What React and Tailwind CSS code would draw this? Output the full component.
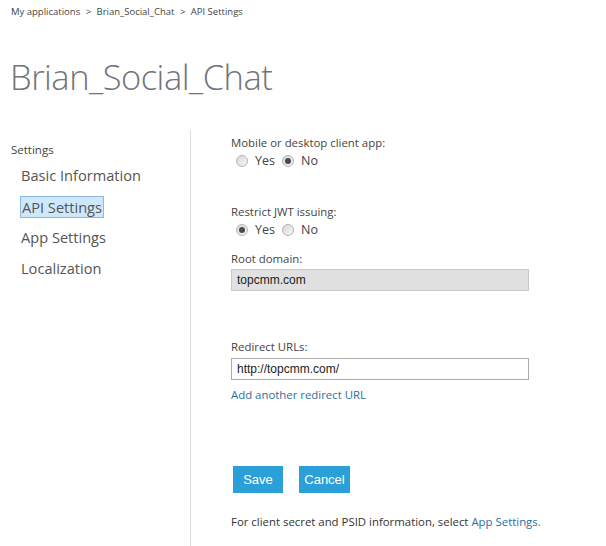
import React from "react";

function Radio({ checked, label }) {
  return (
    <span className="inline-flex items-center mr-[2px]">
      <span className="w-[12px] h-[12px] rounded-full border border-[#b4b4b4] bg-gradient-to-br from-[#d8d8d8] to-[#f6f6f6] flex items-center justify-center ml-[5px]">
        {checked && <span className="w-[6px] h-[6px] rounded-full bg-[#4a4a4a]" />}
      </span>
      <span className="ml-[7px] text-[12.5px]">{label}</span>
    </span>
  );
}

const NAV = ["Basic Information", "API Settings", "App Settings", "Localization"];

export default function App() {
  return (
    <div className="w-[606px] h-[546px] bg-white text-[#444] font-['Open_Sans',sans-serif] overflow-hidden">
      <div className="pt-[5px] pl-[11px] text-[9.5px] leading-[14px] text-[#444]">
        My applications <span className="mx-[3px]">&gt;</span> Brian_Social_Chat{" "}
        <span className="mx-[3px]">&gt;</span> API Settings
      </div>

      <h1 className="mt-[36px] pl-[10px] text-[34.5px] leading-[44px] font-light text-[#727477] tracking-[-0.5px]">
        Brian_Social_Chat
      </h1>

      <div className="flex mt-[31px] h-[420px]">
        <div className="w-[191px] border-r border-[#dcdcdc] pl-[11px] pt-[11px]">
          <div className="text-[11.5px] leading-[18px] text-[#444]">Settings</div>
          <ul className="pl-[10px] pt-[1px]">
            {NAV.map((n) => (
              <li key={n} className="h-[31px] flex items-center text-[14.6px] text-[#555]">
                {n === "API Settings" ? (
                  <span className="px-[1px] -ml-[1px] leading-[20px] bg-[#cde8fb] border border-[#8fb8de]">{n}</span>
                ) : (
                  n
                )}
              </li>
            ))}
          </ul>
        </div>

        <div className="pl-[40px] text-[11.4px] leading-[18px]">
          <div className="mt-[4px]">Mobile or desktop client app:</div>
          <div className="flex items-center h-[18px]">
            <Radio label="Yes" />
            <Radio checked label="No" />
          </div>

          <div className="mt-[33px]">Restrict JWT issuing:</div>
          <div className="flex items-center h-[18px]">
            <Radio checked label="Yes" />
            <Radio label="No" />
          </div>

          <div className="mt-[11px]">Root domain:</div>
          <div className="mt-[1px] w-[298px] h-[22px] bg-[#e1e1e1] border border-[#c8c8c8] px-[5px] flex items-center font-['Liberation_Sans',sans-serif] text-[12px] text-[#222]">
            topcmm.com
          </div>

          <div className="mt-[47px]">Redirect URLs:</div>
          <div className="mt-[2px] w-[298px] h-[22px] bg-white border border-[#ababab] px-[5px] flex items-center font-['Liberation_Sans',sans-serif] text-[12px] text-[#222]">
            http://topcmm.com/
          </div>
          <div className="mt-[6px] text-[#2b6f9e]">Add another redirect URL</div>

          <div className="mt-[62px] flex gap-[16px] pl-[2px]">
            <button className="w-[50px] h-[27px] bg-[#2a9fd8] text-white font-['Liberation_Sans',sans-serif] text-[13px]">
              Save
            </button>
            <button className="w-[51px] h-[27px] bg-[#2a9fd8] text-white font-['Liberation_Sans',sans-serif] text-[13px]">
              Cancel
            </button>
          </div>

          <div className="mt-[20px] text-[#333]">
            For client secret and PSID information, select{" "}
            <span className="text-[#2b6f9e]">App Settings.</span>
          </div>
        </div>
      </div>
    </div>
  );
}
